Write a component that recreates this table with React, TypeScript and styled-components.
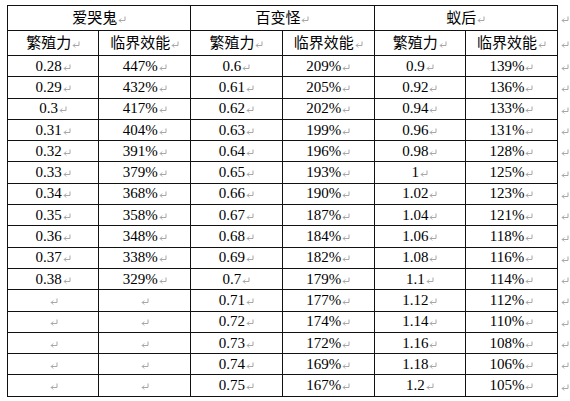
import styled, { createGlobalStyle } from "styled-components";

const Global = createGlobalStyle`
  html, body {
    margin: 0;
    padding: 0;
    background: #fff;
  }
`;

const Page = styled.div`
  padding: 5px 0 0 7px;
  font-family: "Liberation Serif", "Noto Sans CJK SC", serif;
  color: #000;
`;

const Table = styled.table`
  border-collapse: collapse;
  table-layout: fixed;
`;

const Cell = styled.td<{ $head?: boolean }>`
  border: 1px solid #111;
  width: 92px;
  height: ${(p) => (p.$head ? "24px" : "20.3px")};
  padding: 0;
  text-align: center;
  vertical-align: middle;
  font-size: 15px;
  line-height: 1;
  white-space: nowrap;
`;

const EndCell = styled.td`
  border: none;
  width: 9px;
  padding: 0 0 0 2px;
  vertical-align: middle;
`;

const Mark = styled.svg`
  display: inline-block;
  width: 8px;
  height: 7px;
  margin-left: 1px;
  vertical-align: 0px;
`;

const Return = () => (
  <Mark viewBox="0 0 8 7">
    <path
      d="M7 0.5 V4.5 H1.2 M3.2 2.5 L1.2 4.5 L3.2 6.5"
      fill="none"
      stroke="#a6a6a6"
      strokeWidth="1"
    />
  </Mark>
);

const groups = ["爱哭鬼", "百变怪", "蚁后"];

const rate1 = ["0.28", "0.29", "0.3", "0.31", "0.32", "0.33", "0.34", "0.35", "0.36", "0.37", "0.38"];
const eff1 = ["447", "432", "417", "404", "391", "379", "368", "358", "348", "338", "329"];
const rate2 = ["0.6", "0.61", "0.62", "0.63", "0.64", "0.65", "0.66", "0.67", "0.68", "0.69", "0.7", "0.71", "0.72", "0.73", "0.74", "0.75"];
const eff2 = ["209", "205", "202", "199", "196", "193", "190", "187", "184", "182", "179", "177", "174", "172", "169", "167"];
const rate3 = ["0.9", "0.92", "0.94", "0.96", "0.98", "1", "1.02", "1.04", "1.06", "1.08", "1.1", "1.12", "1.14", "1.16", "1.18", "1.2"];
const eff3 = ["139", "136", "133", "131", "128", "125", "123", "121", "118", "116", "114", "112", "110", "108", "106", "105"];

const pct = (v?: string) => (v ? v + "%" : "");

const rows = rate2.map((_, i) => [
  rate1[i] ?? "",
  pct(eff1[i]),
  rate2[i],
  pct(eff2[i]),
  rate3[i],
  pct(eff3[i]),
]);

export default function App() {
  return (
    <Page>
      <Global />
      <Table>
        <tbody>
          <tr>
            {groups.map((g) => (
              <Cell key={g} $head colSpan={2}>
                {g}
                <Return />
              </Cell>
            ))}
            <EndCell>
              <Return />
            </EndCell>
          </tr>
          <tr>
            {groups.map((g) => [
              <Cell key={g + "a"} $head>
                繁殖力
                <Return />
              </Cell>,
              <Cell key={g + "b"} $head>
                临界效能
                <Return />
              </Cell>,
            ])}
            <EndCell>
              <Return />
            </EndCell>
          </tr>
          {rows.map((r, i) => (
            <tr key={i}>
              {r.map((v, j) => (
                <Cell key={j}>
                  {v}
                  <Return />
                </Cell>
              ))}
              <EndCell>
                <Return />
              </EndCell>
            </tr>
          ))}
        </tbody>
      </Table>
    </Page>
  );
}
